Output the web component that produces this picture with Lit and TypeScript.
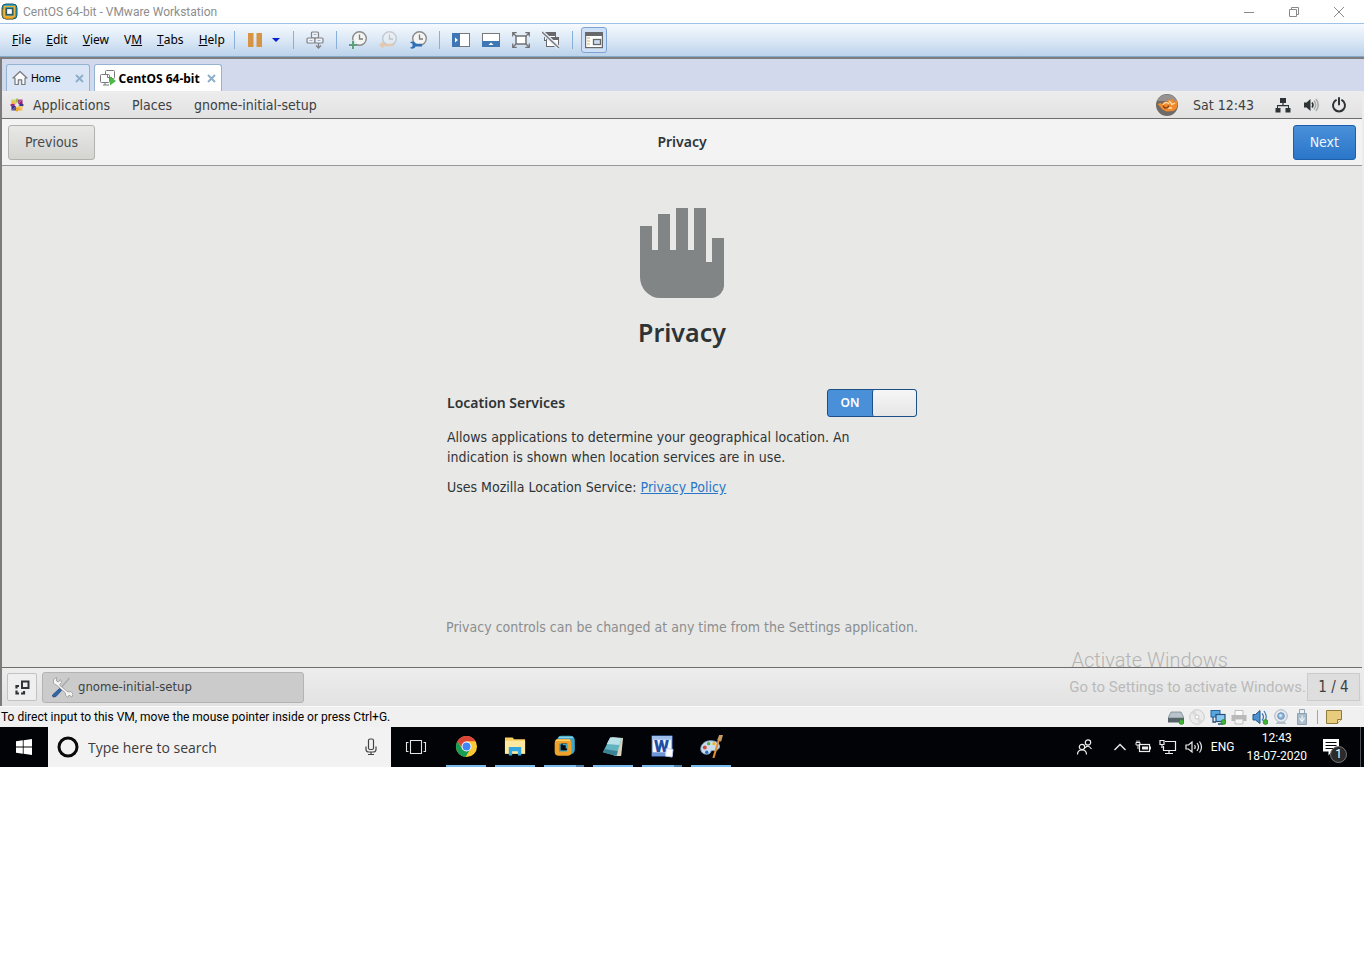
import { LitElement, html, css, svg } from "lit";
import { customElement, state } from "lit/decorators.js";
import { classMap } from "lit/directives/class-map.js";

const icon = (w: number, h: number, body: unknown, box = `0 0 ${w} ${h}`) =>
  html`<svg width=${w} height=${h} viewBox=${box} fill="none" aria-hidden="true">${body}</svg>`;

/* ---------- host window ---------- */
const vmLogo = icon(17, 17, svg`
  <rect x="1" y="1" width="15" height="15" rx="4" fill="#1f9fc4" stroke="#14596e" stroke-width="1"/>
  <path d="M1.500 6v6a4 4 0 0 0 4 4h6.500l2-3H4.500V6z" fill="#f0a422" stroke="#7a5a16" stroke-width=".6"/>
  <path d="M3.500 3.500h10v10h-10z" stroke="#e9b13e" stroke-width="1.500"/>
  <rect x="5.500" y="5.500" width="6" height="6" fill="#fff" stroke="#2b5a66" stroke-width="1.300"/>`);

const winMin = icon(12, 12, svg`<path d="M1 6.500h10" stroke="#8a8a8a"/>`);
const winRestore = icon(12, 12, svg`<path d="M1.500 3.500h7v7h-7zM3.500 3.500v-2h7v7h-2" stroke="#8a8a8a"/>`);
const winClose = icon(12, 12, svg`<path d="M1 1l10 10M11 1L1 11" stroke="#8a8a8a"/>`);

const pause = icon(16, 16, svg`<path d="M1 1h5.500v14H1zM9.500 1H15v14H9.500z" fill="#d69444"/>`);
const caret = icon(10, 16, svg`<path d="M1 6h8L5 10z" fill="#0a1fd0"/>`);
const keys = icon(18, 18, svg`
  <g stroke="#7f8287" stroke-width="1.200" fill="#eef2f7"><rect x="5.500" y="1" width="7" height="6" rx="1"/><rect x="1" y="7" width="8" height="5" rx="1"/><rect x="9" y="7" width="8" height="5" rx="1"/></g>
  <path d="M7.500 3.500h3M3.500 9.500h3M11.500 9.500h3" stroke="#9db4d2"/>
  <path d="M12.500 12v5M10 14.500l2.500 2.500 2.500-2.500" stroke="#7f8287" stroke-width="1.300"/>`);
const clockFace = svg`<circle cx="10.500" cy="7.500" r="6.800" fill="#f4f4f2" stroke="#8b8b8b" stroke-width="1.400"/><path d="M10.500 3.500V8H14" stroke="#7d7d7d" stroke-width="1.300"/>`;
const snapAdd = icon(18, 18, svg`${clockFace}<path d="M4 9.500v8M0 13.500h8" stroke="#dce9f6" stroke-width="3.500"/><path d="M4 10v8M0 14h8" stroke="#5d9f7c" stroke-width="2"/>`);
const snapBack = icon(18, 18, svg`<g opacity=".35">${clockFace}</g><path d="M0 14l4.500-4v2.800H15v2.500H4.500V18z" fill="#e3c8ad"/>`);
const snapTool = icon(18, 18, svg`${clockFace}<path d="M1 11.500a3.300 3.300 0 0 1 5.500 1.300H13v2.600H6.500A3.300 3.300 0 0 1 1 16.700l2.500-1.300v-2.600z" fill="#2f6fb5"/>`);
const paneLeft = icon(18, 18, svg`<rect x=".5" y="2.500" width="17" height="13" fill="#fff" stroke="#77797c"/><path d="M0 2h8v14H0z" fill="#3f76b4"/><path d="M3 6.500L6 9l-3 2.500z" fill="#fff"/>`);
const paneBottom = icon(18, 18, svg`<rect x=".5" y="2.500" width="17" height="13" fill="#fff" stroke="#77797c"/><path d="M0 10h18v6H0z" fill="#3f76b4"/><path d="M6.500 14L9 11.500l2.500 2.500z" fill="#fff"/>`);
const fullScreen = icon(18, 18, svg`<rect x="4" y="5" width="10" height="8" fill="#fff" stroke="#6f7174" stroke-width="1.500"/><path d="M4 5L1 2M14 5l3-3M4 13l-3 3M14 13l3 3M.7 5.500V1.700h4M13.300 1.700h4v3.800M.7 12.500v3.800h4M13.300 16.300h4v-3.800" stroke="#6f7174" stroke-width="1.200"/>`);
const unity = icon(18, 18, svg`<rect x="2.500" y="1.500" width="11" height="8" fill="#fff" stroke="#66686b"/><path d="M2 1h12v4H2z" fill="#66686b"/><rect x="4.500" y="6.500" width="12" height="9" fill="#fff" stroke="#66686b"/><path d="M4 6h13v3H4z" fill="#66686b"/><path d="M0 1l17 16" stroke="#e6eef8" stroke-width="4"/><path d="M0 1l17 16" stroke="#77797c" stroke-width="1.400"/>`);
const library = icon(18, 18, svg`<rect x=".6" y="1.600" width="16.800" height="15" fill="#fff" stroke="#66686b" stroke-width="1.200"/><path d="M0 1h18v4H0z" fill="#66686b"/><path d="M2 7h3M2 10h3M2 13h3" stroke="#e3a951" stroke-width="1.200"/><rect x="8.500" y="8.500" width="7" height="5" fill="#cdddf0" stroke="#66686b" stroke-width="1.300"/>`);
const home = icon(16, 16, svg`<path d="M1 8l7-6.500L15 8h-2v6.500H9.700V9.800H6.300v4.700H3V8z" fill="#fbfbfb" stroke="#77797c" stroke-width="1.200" stroke-linejoin="round"/>`);
const vmTab = icon(16, 16, svg`<rect x="5.500" y=".5" width="9" height="8" rx="1" fill="#fff" stroke="#77797c"/><rect x=".5" y="4.500" width="9" height="8" rx="1" fill="#fff" stroke="#77797c"/><path d="M7.500 4v3.500H12M3 15h6M5 12.500V15" stroke="#77797c"/><path d="M10 6.500l6 4.500-6 4.500z" fill="#4db848"/>`);
const tabX = icon(9, 9, svg`<path d="M1 1l7 7M8 1L1 8" stroke="#8eafca" stroke-width="2"/>`);

/* ---------- guest desktop ---------- */
const centos = icon(16, 16, svg`
  <path d="M8 1l2 2.500L8 6.500 6 3.500z" fill="#9dc343"/><path d="M8 9.500l2 3L8 15l-2-2.500z" fill="#efa724"/>
  <path d="M1 8l2.500-2L6.500 8l-3 2z" fill="#a0287f"/><path d="M9.500 8l3-2L15 8l-2.500 2z" fill="#3a3687"/>
  <path d="M2.500 2.500H7v4.500z" fill="#c3d96a"/><path d="M13.500 2.500V7L9 7z" fill="#932279"/><path d="M2.500 13.500V9H7z" fill="#352e85"/><path d="M13.500 13.500H9V9z" fill="#f0b03f"/>
  <path d="M2.500 2.500V7H7z" fill="#efb04a"/><path d="M13.500 2.500H9V7z" fill="#b0458f"/><path d="M2.500 13.500H7V9z" fill="#5a55a0"/><path d="M13.500 13.500V9H9z" fill="#f4c565"/>`);
const sessionIcon = icon(24, 24, svg`
  <circle cx="12" cy="12" r="11" fill="#6d6a68"/><path d="M2 8a11 11 0 0 1 20 0z" fill="#97928f"/>
  <path d="M2.500 11l3-1 2 1 2-2.500h3l1-2 2 1 2.500-2 1 3 3-1 .5 4-1 4-3 2.500-7 .500-4-2z" fill="#f08a2c"/>
  <path d="M8 12c1-3 5-3 6-1M11 15h6M14 8l3 3M16 12l4-2" stroke="#ffe0a8" stroke-width="1.300"/>
  <path d="M8.500 12.500a2.500 2.500 0 1 0 5 0" stroke="#8a3c0c" stroke-width="1.300"/>`);
const wired = icon(16, 16, svg`<path d="M5 1h6v5H8.600v2H14v3h1.500v4.500h-5V11H13V9.300H3V11h2.500v4.500h-5V11H2V8h5.400V6H5z" fill="#2e3436"/>`);
const volume = icon(16, 16, svg`<path d="M1 5.500h2.500L7.500 2v12l-4-3.500H1z" fill="#2e3436"/><path d="M9 5.500q2 2.500 0 5" stroke="#2e3436" stroke-width="1.600"/><path d="M11 3.500q3.500 4.500 0 9M13 2q4.500 6 0 12" stroke="#a9abab" stroke-width="1.500"/>`);
const power = icon(16, 16, svg`<path d="M5 3.200a6 6 0 1 0 6 0" stroke="#2e3436" stroke-width="2" stroke-linecap="round"/><path d="M8 1v6.500" stroke="#2e3436" stroke-width="2" stroke-linecap="round"/>`);
const hand = icon(84, 90, svg`<path d="M0 18h12v24H18V6h12v36H36V0h12v42H54V0h12v54H72V30h12v46a13 13 0 0 1-13 14H20A20 21 0 0 1 0 69z" fill="#828585"/>`);
const showDesk = icon(15, 15, svg`<rect x="7" y="1.500" width="6.500" height="6.500" stroke="#2e3436" stroke-width="2"/><path d="M4 6H1.500v2.500M1.500 10.500v3H4M6 13.500h3V11" stroke="#2e3436" stroke-width="2.200"/>`);
const tools = icon(22, 22, svg`
  <path d="M18.500 2L8 14" stroke="#a8abad" stroke-width="1.500"/><path d="M8.500 12.500l2 2-5.500 6-3 .5-.5-2z" fill="#3465a4" stroke="#204a87" stroke-width=".8"/>
  <path d="M2.500 3.500l3-2v3.500l2 1 2-2.500 1 3-2 2.500 8.500 7 3-.5 2 2.500-1 3-3-2-1 2.500-2.500-2v-2.500L6 9.500l-3.500-2z" fill="#f4f4f2" stroke="#989a98" stroke-width=".8"/>`);

/* ---------- VM device strip ---------- */
const dot = svg`<circle cx="13.500" cy="13" r="2.500" fill="#3fb233" stroke="#26801e" stroke-width=".6"/>`;
const devices = [
  ["Hard disk", svg`<path d="M3 3h10l3 6H0z" fill="#b9c3cb" stroke="#7b868e" stroke-width=".8"/><path d="M0 9h16v4.500H0z" fill="#59636c"/>${dot}`],
  ["CD/DVD", svg`<circle cx="8" cy="8" r="7.300" fill="#ebebeb" stroke="#cbcbcb"/><path d="M8 8L2 4a7 7 0 0 1 4-3zM8 8l6 4a7 7 0 0 1-4 3z" fill="#dadada"/><circle cx="8" cy="8" r="2" fill="#fff" stroke="#c4c4c4"/>`],
  ["Network", svg`<rect x="1" y="1.500" width="9" height="6.500" fill="#58a6e0" stroke="#24659c"/><rect x="6" y="5.500" width="9" height="7" fill="#8ac8f2" stroke="#24507c" stroke-width="1.200"/><path d="M3 8v5h3M8 15h5" stroke="#24507c" stroke-width="1.300"/>${dot}`],
  ["Printer", svg`<path d="M4 1.500h8v5H4z" fill="#fafafa" stroke="#bdbdbd"/><path d="M.5 6h15v6H.5z" fill="#b9b9b9"/><path d="M4 10h8v5H4z" fill="#f4f4f4" stroke="#bdbdbd"/>`],
  ["Sound card", svg`<path d="M1 5.500h2.500L8 1.500v13L3.500 11H1z" fill="#4b90cf" stroke="#225486"/><path d="M10 4.500q3 3.500 0 7M12 2q4.500 6 0 12" stroke="#3a78b5" stroke-width="1.200"/>${dot}`],
  ["Camera", svg`<path d="M2.500 15h11L11 12H5z" fill="#b8bfc6"/><circle cx="8" cy="7" r="6.300" fill="#e4e9ee" stroke="#a9b6c2"/><circle cx="8" cy="7" r="3.300" fill="#8bb6dd" stroke="#7392b0"/><circle cx="7.500" cy="6.500" r="1.200" fill="#e8f4ff"/>`],
  ["USB", svg`<path d="M5.500.5h5v4h-5z" fill="#eef0f2" stroke="#9aa4ad"/><path d="M3.500 4.500h9v11h-9z" fill="#a9bccb" stroke="#8fa2b1"/><path d="M8 6.500v7M6 9v1.500L8 12l2-1.500V8.500" stroke="#fff"/>`],
] as const;
const note = icon(16, 14, svg`<path d="M.5.500h15v9l-4 4H.5z" fill="#e8cc7d" stroke="#8f7a3d"/><path d="M15.500 9.500h-4v4" fill="#f6e8b9" stroke="#8f7a3d"/>`);

/* ---------- host task bar ---------- */
const start = icon(16, 16, svg`<path d="M0 2.300l6.800-1v6.300H0zM7.600 1.200L16 0v7.600H7.600zM0 8.400h6.800v6.300L0 13.700zM7.600 8.400H16V16l-8.400-1.200z" fill="#fff"/>`);
const ring = icon(22, 22, svg`<circle cx="11" cy="11" r="9" stroke="#0a0a0a" stroke-width="3"/>`);
const mic = icon(14, 18, svg`<rect x="4.500" y="1" width="5" height="10.500" rx="1.500" stroke="#444" stroke-width="1.200"/><path d="M2 8.500v3q0 2.500 3 2.500h4q3 0 3-2.500v-3M7 14v2.500M4 16.500h6" stroke="#444" stroke-width="1.200"/>`);
const taskView = icon(22, 16, svg`<path d="M5.500 1.500h11v13h-11zM3.500 3.500h-2v9h2M18.500 3.500h2v9h-2" stroke="#e4e4e4" stroke-width="1.100"/>`);
const apps = [
  ["Chrome", false, svg`<circle cx="12" cy="12" r="11" fill="#fcc934"/><path d="M2.500 6.500a11 11 0 0 1 19 0H12L8 14z" fill="#db4437"/><path d="M2.500 6.500a11 11 0 0 0 8.500 16.500l5-8.500-8 .5z" fill="#169e57"/><circle cx="12" cy="12" r="5.200" fill="#fff"/><circle cx="12" cy="12" r="4.200" fill="#4285f4"/>`],
  ["File Explorer", false, svg`<path d="M1 2.500h8l1.500 2H22v15H1z" fill="#f7cf63"/><path d="M1 6h21v13.500H1z" fill="#ffe8a0"/><path d="M5 21.500v-9h13v9h-3.500V17h-6v4.500z" fill="#35a7e0"/>`],
  ["VMware Workstation", true, svg`<rect x="6.500" y="3" width="14" height="15" rx="2.500" stroke="#3fa5c4" stroke-width="4.500"/><path d="M6 2.500h15" stroke="#8ad2e6" stroke-width="1.500"/><rect x="4" y="6.500" width="13" height="13" rx="2" stroke="#f0a32a" stroke-width="4.500"/><path d="M3 5.500h15" stroke="#ffd06b" stroke-width="1.500"/><path d="M8 10h6v6H8z" fill="#05080b"/><path d="M10 10h4v4" stroke="#3fa5c4" stroke-width="1.500"/>`],
  ["Notepad", false, svg`<path d="M10 2l12 1-2 19-7 0z" fill="#d9d2bd"/><path d="M8.500 2.500l12 1L15 22 1 18z" fill="#62b3c2"/><path d="M8.500 2.500l12 1-2.500 7-13-1z" fill="#b9e2e8"/><path d="M3 14.500L16.500 17 15 22 1 18z" fill="#3d8293"/>`],
  ["Word", true, svg`<rect x="1" y="1" width="21" height="21" fill="#f5f8fd" stroke="#2a5db0"/><path d="M1 1h21v4H1z" fill="#9fbdea"/><path d="M1 18h14v4H1z" fill="#6f97d8"/><text x="11" y="18" text-anchor="middle" font-family="Roboto" font-size="18" font-weight="900" fill="#1e4fa5">W</text><path d="M16 14l7 1-1 8-7-1z" fill="#fff" stroke="#b9cbe8"/>`],
  ["Paint", false, svg`<path d="M11 6C4 6 0 11 1 16c1 5 9 5 10 2s3-1 6-2c6-2 4-10-6-10z" fill="#c6def0" stroke="#7ea6c4"/><circle cx="5" cy="13" r="2" fill="#d6473a"/><circle cx="9" cy="9" r="1.800" fill="#5fae3f"/><circle cx="14.500" cy="9" r="1.700" fill="#f0b22c"/><circle cx="7" cy="18" r="1.700" fill="#2f6bbd"/><path d="M20 4l-6 20" stroke="#e08e35" stroke-width="2.200"/><path d="M18 5l2-5h4l-2 7z" fill="#c79a63"/>`],
] as const;
const people = icon(18, 18, svg`<circle cx="12" cy="4.500" r="2.700" stroke="#eee" stroke-width="1.200"/><path d="M9 10q3-4 6.500 1" stroke="#eee" stroke-width="1.200"/><circle cx="6" cy="9" r="2.700" stroke="#eee" stroke-width="1.200"/><path d="M1.500 16.500q0-4.500 4.500-4.500t4.500 4.500" stroke="#eee" stroke-width="1.200"/>`);
const chevron = icon(14, 16, svg`<path d="M1.500 11L7 5.500l5.500 5.500" stroke="#eee" stroke-width="1.400"/>`);
const battery = icon(16, 16, svg`<rect x="4.500" y="5.500" width="10" height="7" stroke="#eee" stroke-width="1.200"/><path d="M15.500 7.500v3" stroke="#eee"/><path d="M7 7.500h6v3H7z" fill="#eee"/><path d="M1 3.500h4v2.500H1zM2 3.500v-2M4 3.500v-2M3 6v4" stroke="#eee"/>`);
const netTray = icon(18, 16, svg`<path d="M6 2.500h10.500v9H4.500V7M10 11.500v3M6 14.500h8" stroke="#eee" stroke-width="1.200"/><path d="M1 1.500h4v4H1zM3 5.500V9" stroke="#eee" stroke-width="1.200"/>`);
const sndTray = icon(18, 16, svg`<path d="M1 6h2.500L7 3v10L3.500 10H1z" stroke="#eee" stroke-width="1.200"/><path d="M9.500 6q1.500 2 0 4M12 4q3 4 0 8M14.500 2.500q4 5.500 0 11" stroke="#eee" stroke-width="1.200"/>`);
const notice = icon(16, 17, svg`<path d="M0 0h16v12.500H9L5.500 16.500v-4H0z" fill="#fff"/><path d="M2.500 3.500h11M2.500 6.500h11M2.500 9.500h8" stroke="#05070b"/>`);

@customElement("app-root")
export class AppRoot extends LitElement {
  @state() private location = true;

  static styles = css`
    :host { display: block; color: #000; font-family: Roboto, "Open Sans", sans-serif; font-size: 12px; background: #fff; }
    * { box-sizing: border-box; }
    svg { display: block; flex: none; }
    button, input { font: inherit; color: inherit; margin: 0; }
    button { display: flex; align-items: center; justify-content: center; padding: 0; border: 0; background: none; white-space: nowrap; }
    a { color: #2a76c6; }
    p, h1, h2 { margin: 0; }

    .titlebar { display: flex; align-items: center; height: 23px; padding: 0 19px 0 1px; gap: 5px; color: #8d8d8d; white-space: nowrap; }
    .caption { flex: 1; }
    .winbtns { display: flex; gap: 33px; height: 20px; }

    .toolbar { display: flex; align-items: center; height: 34px; border-top: 1px solid #9fc3e6; border-bottom: 1px solid #86a9ca; background: linear-gradient(#f6fafe, #dbe8f6 50%, #bcd3eb); }
    .menus { display: flex; flex: none; gap: 15px; width: 234px; padding-left: 12px; font: 12px/16px "Noto Sans", sans-serif; }
    .key { text-decoration: underline; }
    .group { display: flex; align-items: center; gap: 12px; height: 18px; padding: 0 12px; border-left: 1px solid #86afd9; }
    .tight { gap: 8px; }
    .last { padding-left: 8px; }
    .pressed { width: 26px; height: 26px; border: 1px solid #7ba3d6; border-radius: 3px; background: #cfe0f6; }

    .vmtabs { display: flex; align-items: flex-end; gap: 4px; height: 34px; padding-left: 4px; border-top: 2px solid #7d7d7d; border-left: 2px solid #7b7b7b; background: #d3d9ec; }
    .vmtab { display: flex; align-items: center; height: 27px; padding: 0 5px; border: 1px solid #93b5d3; border-bottom: 0; border-radius: 3px 3px 0 0; background: #dae6f5; font-size: 11px; }
    .vmtab .name { padding: 0 14px 0 3px; }
    .current { background: #fff; font: 700 12px "Noto Sans", sans-serif; }
    .current .name { padding-right: 7px; }

    .guest { border-left: 2px solid #7b7b7b; border-right: 2px solid #ececec; background: #e8e8e6; color: #2e3436; font: 14px/20px "DejaVu Sans Condensed", "Noto Sans", sans-serif; }
    .panel { display: flex; align-items: center; background: linear-gradient(#ededed, #e2e2e2); color: #3b4143; white-space: nowrap; }
    .top { height: 28px; padding: 0 15px 0 7px; border-bottom: 1px solid #6e6e6e; }
    .top nav { display: flex; flex: 1; gap: 22px; }
    .apps { gap: 8px; }
    .indicators { display: flex; align-items: center; gap: 12px; }
    .indicators time { padding: 0 9px 0 2px; }

    .header { display: grid; grid-template-columns: 1fr auto 1fr; align-items: center; height: 47px; padding: 0 6px; border-bottom: 1px solid #979797; background: #f3f3f3; }
    .header h2 { font: 600 14px/20px "Noto Sans", sans-serif; }
    .btn { height: 35px; padding: 0 16px; border: 1px solid #b1b1ae; border-radius: 3px; background: linear-gradient(#e8e8e7, #d4d4d1); color: #454b4d; }
    .go { justify-self: end; border-color: #1c5fa8; background: linear-gradient(#4a90d9, #2a76c9); color: #eef5fc; }

    .page { position: relative; padding: 42px 16px 30px; }
    .column { display: flex; flex-direction: column; max-width: 470px; margin: 0 auto; }
    .hand { align-self: center; }
    .column h1 { margin-top: 14px; text-align: center; font: 600 25px/40px "Noto Sans", sans-serif; }
    .setting { display: flex; align-items: center; justify-content: space-between; height: 28px; margin-top: 37px; font: 600 14px/20px "Noto Sans", sans-serif; }
    .switch { display: grid; grid-template-columns: 1fr 1fr; align-items: center; width: 90px; height: 28px; border: 1px solid #1c5187; border-radius: 3px; background: #4a90d9; overflow: hidden; }
    .switch.off { background: #c9c9c7; }
    .box { appearance: none; grid-area: 1 / 2; width: 100%; height: 100%; border-left: 1px solid #1c5187; border-radius: 2px; background: linear-gradient(#f6f6f6, #e6e6e6); }
    .off .box { grid-column: 1; }
    .on { grid-area: 1 / 1; text-align: center; font-size: 12px; color: #fff; }
    .off .on { grid-column: 2; }
    .para { max-width: 420px; margin-top: 10px; }
    .hint { display: flex; justify-content: center; margin-top: 120px; white-space: nowrap; color: #8b8e8f; }
    .watermark { position: absolute; right: 134px; bottom: -4px; font: 20px/22px Roboto, sans-serif; font-weight: 300; color: #b4b4b4; }

    .bottom { height: 39px; gap: 5px; padding: 0 2px 0 5px; border-top: 1px solid #6e6e6e; }
    .desk { width: 30px; height: 28px; border: 1px solid #c2c2c2; border-radius: 2px; background: #efefef; }
    .task { justify-content: flex-start; gap: 5px; width: 262px; height: 31px; padding-left: 8px; border: 1px solid #b3b3b3; border-radius: 3px; background: #cbcbcb; font-size: 13px; }
    .sub { flex: 1; text-align: right; font: 15px/20px Roboto, sans-serif; color: #bababa; }
    .pager { width: 53px; height: 28px; margin-left: -4px; border: 1px solid #cbcbcb; background: #dedede; font-size: 15px; }

    .status { display: flex; align-items: center; height: 21px; padding: 0 22px 0 1px; border-top: 1px solid #fafafa; background: #f0f0f0; white-space: nowrap; }
    .status p { flex: 1; }
    .devices { display: flex; align-items: center; gap: 5px; }
    .pad { margin-left: 2px; padding-left: 8px; border-left: 1px solid #a5a5a5; }

    .taskbar { display: flex; align-items: stretch; height: 40px; background: #010307; color: #fff; white-space: nowrap; }
    .start { width: 48px; }
    .search { display: flex; align-items: center; gap: 9px; width: 343px; padding: 0 13px 0 9px; background: #f2f2f2; color: #3c3c3c; }
    .search input { flex: 1; min-width: 0; padding: 0; border: 0; outline: 0; background: none; font: 14px "Open Sans", sans-serif; }
    .search input::placeholder { color: #3c3c3c; opacity: 1; }
    .view { width: 50px; }
    .running { display: flex; flex: 1; gap: 9px; padding-left: 5px; }
    .app { width: 40px; border-bottom: 2px solid #76b9ed; }
    .multi { border-image: linear-gradient(90deg, #76b9ed 31px, #4d7fa8 31px) 2; border-image-width: 0 0 2px; }
    .tray { display: flex; align-items: center; gap: 8px; }
    .people { margin-right: 11px; }
    .clock { text-align: center; line-height: 18px; padding: 0 8px 0 4px; }
    .alerts { position: relative; width: 37px; justify-content: flex-start; }
    .badge { position: absolute; left: 7px; top: 7px; width: 17px; height: 17px; border: 1px solid #777; border-radius: 50%; background: #2b2b2b; line-height: 15px; text-align: center; }
    .edge { width: 4px; border-left: 1px solid #4c4f54; }
  `;

  private tool(name: string, glyph: unknown) {
    return html`<button aria-label=${name}>${glyph}</button>`;
  }

  render() {
    return html`
      <header class="titlebar">
        ${vmLogo}
        <span class="caption">CentOS 64-bit - VMware Workstation</span>
        <div class="winbtns">
          ${this.tool("Minimize", winMin)}${this.tool("Restore", winRestore)}${this.tool("Close", winClose)}
        </div>
      </header>

      <div class="toolbar">
        <nav class="menus">
          <button><span class="key">F</span>ile</button>
          <button><span class="key">E</span>dit</button>
          <button><span class="key">V</span>iew</button>
          <button>V<span class="key">M</span></button>
          <button><span class="key">T</span>abs</button>
          <button><span class="key">H</span>elp</button>
        </nav>
        <div class="group tight">${this.tool("Suspend", pause)}${this.tool("Power options", caret)}</div>
        <div class="group">${this.tool("Send Ctrl+Alt+Del", keys)}</div>
        <div class="group">
          ${this.tool("Take snapshot", snapAdd)}${this.tool("Revert snapshot", snapBack)}${this.tool("Manage snapshots", snapTool)}
        </div>
        <div class="group">
          ${this.tool("Show library", paneLeft)}${this.tool("Show thumbnails", paneBottom)}${this.tool("Full screen", fullScreen)}${this.tool("Unity", unity)}
        </div>
        <div class="group last"><button class="pressed" aria-label="Console view">${library}</button></div>
      </div>

      <div class="vmtabs">
        <div class="vmtab">${home}<span class="name">Home</span>${this.tool("Close Home", tabX)}</div>
        <div class="vmtab current">${vmTab}<span class="name">CentOS 64-bit</span>${this.tool("Close CentOS", tabX)}</div>
      </div>

      <section class="guest">
        <div class="panel top">
          <nav>
            <button class="apps">${centos}Applications</button>
            <button>Places</button>
            <button>gnome-initial-setup</button>
          </nav>
          <div class="indicators">
            ${sessionIcon}<time>Sat 12:43</time>
            ${this.tool("Network", wired)}${this.tool("Volume", volume)}${this.tool("Power", power)}
          </div>
        </div>

        <div class="header">
          <div><button class="btn">Previous</button></div>
          <h2>Privacy</h2>
          <button class="btn go">Next</button>
        </div>

        <main class="page">
          <div class="column">
            <div class="hand">${hand}</div>
            <h1>Privacy</h1>
            <div class="setting">
              <label for="location">Location Services</label>
              <div class=${classMap({ switch: true, off: !this.location })}>
                <span class="on">${this.location ? "ON" : "OFF"}</span>
                <input class="box" id="location" type="checkbox" role="switch" .checked=${this.location}
                  @change=${(e: Event) => (this.location = (e.target as HTMLInputElement).checked)}>
              </div>
            </div>
            <p class="para">Allows applications to determine your geographical location. An indication is shown when location services are in use.</p>
            <p class="para">Uses Mozilla Location Service: <a href="#privacy">Privacy Policy</a></p>
            <p class="hint">Privacy controls can be changed at any time from the Settings application.</p>
          </div>
          <div class="watermark">Activate Windows</div>
        </main>

        <div class="panel bottom">
          <button class="desk" aria-label="Show desktop">${showDesk}</button>
          <button class="task">${tools}gnome-initial-setup</button>
          <span class="sub">Go to Settings to activate Windows.</span>
          <button class="pager">1 / 4</button>
        </div>
      </section>

      <div class="status">
        <p>To direct input to this VM, move the mouse pointer inside or press Ctrl+G.</p>
        <div class="devices">
          ${devices.map(([name, body]) => this.tool(name, icon(16, 16, body)))}
          <div class="pad">${this.tool("Message log", note)}</div>
        </div>
      </div>

      <footer class="taskbar">
        <button class="start" aria-label="Start">${start}</button>
        <label class="search">
          ${ring}<input type="text" aria-label="Search" placeholder="Type here to search">${mic}
        </label>
        <button class="view" aria-label="Task view">${taskView}</button>
        <div class="running">
          ${apps.map(([name, multi, body]) => html`
            <button class=${classMap({ app: true, multi })} aria-label=${name}>${icon(23, 23, body, "0 0 24 24")}</button>`)}
        </div>
        <div class="tray">
          <div class="people">${this.tool("People", people)}</div>
          ${this.tool("Hidden icons", chevron)}${this.tool("Battery", battery)}${this.tool("Network", netTray)}${this.tool("Speakers", sndTray)}
          <button>ENG</button>
          <div class="clock">12:43<br>18-07-2020</div>
          <button class="alerts" aria-label="Notifications">${notice}<span class="badge">1</span></button>
        </div>
        <div class="edge"></div>
      </footer>
    `;
  }
}
